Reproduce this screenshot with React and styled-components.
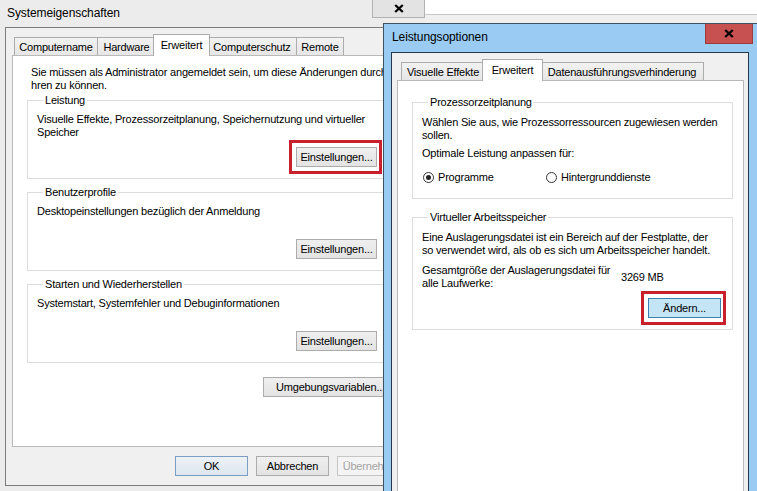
import React from "react";
import styled, { createGlobalStyle, css } from "styled-components";

const GlobalStyle = createGlobalStyle`
  html, body {
    margin: 0;
    padding: 0;
  }
  body {
    font-family: "Liberation Sans", Arial, sans-serif;
    font-size: 11px;
    letter-spacing: -0.2px;
    color: #000;
    background: #f0f0f0;
  }
`;

const Desktop = styled.div`
  position: relative;
  width: 757px;
  height: 491px;
  overflow: hidden;
  background: #f0f0f0;
`;

const BackWindow = styled.div`
  position: absolute;
  left: 424px;
  top: 0;
  right: 0;
  height: 14px;
  background: #fff;
  border-bottom: 1px solid #c9c9c9;
`;

/* ---------- generic window parts ---------- */

const CloseButton = styled.div`
  box-sizing: border-box;
  width: ${(p) => p.$w}px;
  height: ${(p) => p.$h}px;
  margin-right: ${(p) => p.$mr || 0}px;
  display: flex;
  align-items: center;
  justify-content: center;
  background: ${(p) => (p.$red ? "#c75050" : "#e3e3e3")};
  border: 1px solid ${(p) => (p.$red ? "#9d3c3c" : "#b1b1b1")};
  border-top: none;
  flex: none;
`;

const CloseIcon = () => (
  <svg width="10" height="9" viewBox="0 0 10 9">
    <path d="M1.2 1 L8.8 8 M8.8 1 L1.2 8" stroke="#000" strokeWidth="2.3" fill="none" />
  </svg>
);

const TabStrip = styled.div`
  display: flex;
  align-items: flex-end;
  height: 21px;
  padding-left: ${(p) => p.$inset}px;
  position: relative;
  z-index: 1;
  flex: none;
`;

const Tab = styled.div`
  box-sizing: border-box;
  width: ${(p) => p.$w}px;
  height: 18px;
  margin-right: -1px;
  border: 1px solid #acacac;
  border-bottom: none;
  background: linear-gradient(#f2f2f2, #e6e6e6);
  display: flex;
  align-items: center;
  justify-content: center;
  white-space: nowrap;
  ${(p) =>
    p.$active &&
    css`
      width: ${p.$w + 4}px;
      height: 22px;
      margin: 0 -3px -1px -2px;
      padding-bottom: 1px;
      background: #fff;
      position: relative;
      z-index: 1;
    `}
`;

const TabPanel = styled.div`
  box-sizing: border-box;
  background: #fff;
  border: 1px solid #b9b9b9;
  padding: ${(p) => p.$pad};
  display: flex;
  flex-direction: column;
  ${(p) => (p.$h ? `height: ${p.$h}px; flex: none;` : "flex: 1;")}
`;

const Group = styled.fieldset`
  margin: ${(p) => p.$mt || 0}px 0 0 0;
  min-width: 0;
  border: 1px solid #dcdcdc;
  padding: 0 ${(p) => p.$pr}px ${(p) => p.$pb}px 9px;
`;

const GroupLabel = styled.legend`
  margin-left: 6px;
  padding: 0 2px;
  line-height: 13px;
`;

const GroupBody = styled.div`
  display: flex;
  flex-direction: column;
  padding-top: ${(p) => p.$pt}px;
  ${(p) => p.$h && `height: ${p.$h}px; box-sizing: border-box;`}
`;

const Text = styled.div`
  line-height: 13px;
  white-space: nowrap;
  margin-top: ${(p) => p.$mt || 0}px;
  margin-left: ${(p) => p.$ml || 0}px;
`;

const ButtonRow = styled.div`
  display: flex;
  justify-content: flex-end;
  margin-top: ${(p) => (p.$mt === undefined ? "auto" : `${p.$mt}px`)};
  gap: ${(p) => p.$gap || 0}px;
  padding-right: ${(p) => p.$pr || 0}px;
`;

const Button = styled.button`
  box-sizing: border-box;
  width: ${(p) => p.$w}px;
  height: 20px;
  padding: 0;
  border-radius: 0;
  font: inherit;
  letter-spacing: inherit;
  color: ${(p) => (p.disabled ? "#a3a3a3" : "#000")};
  background: ${(p) =>
    p.$focus
      ? "#c4e5f6"
      : p.$default
      ? "linear-gradient(#ecf2f7, #dde6ee)"
      : p.disabled
      ? "#f4f4f4"
      : "linear-gradient(#efefef, #e3e3e3)"};
  border: 1px solid
    ${(p) =>
      p.$focus
        ? "#3c7fb1"
        : p.$default
        ? "#7a9fc2"
        : p.disabled
        ? "#c6c6c6"
        : "#acacac"};
`;

const Highlight = styled.span`
  display: inline-flex;
  padding: 4px 2px 4px 4px;
  margin: -7px -5px -7px -7px;
  border: 3px solid #c8202c;
`;

/* ---------- Systemeigenschaften ---------- */

const SysWindow = styled.div`
  position: absolute;
  left: 0;
  top: 0;
  width: 425px;
  height: 491px;
  background: #ececec;
  display: flex;
  flex-direction: column;
`;

const SysTitleBar = styled.div`
  height: 27px;
  display: flex;
  align-items: flex-start;
  justify-content: space-between;
  flex: none;
`;

const WindowTitle = styled.div`
  padding: ${(p) => p.$pt}px 0 0 ${(p) => p.$pl}px;
  font-size: 12px;
  letter-spacing: -0.1px;
  line-height: 14px;
  white-space: nowrap;
`;

const SysClient = styled.div`
  box-sizing: border-box;
  height: 459px;
  margin: 0 6px 0 5px;
  border: 1px solid #7c7c7c;
  background: #f0f0f0;
  padding: 6px 5px 0 6px;
  display: flex;
  flex-direction: column;
`;

/* ---------- Leistungsoptionen ---------- */

const PerfWindow = styled.div`
  position: absolute;
  left: 383px;
  top: 23px;
  width: 375px;
  height: 480px;
  box-sizing: border-box;
  border: 1px solid #3f5264;
  background: #99cbf3;
  display: flex;
  flex-direction: column;
`;

const PerfTitleBar = styled.div`
  height: 28px;
  display: flex;
  align-items: flex-start;
  justify-content: space-between;
  flex: none;
`;

const PerfClient = styled.div`
  flex: 1;
  margin: 0 8px 0 7px;
  border: 1px solid #24384c;
  border-bottom: none;
  background: #f0f0f0;
  padding: 6px 4px 0 5px;
  display: flex;
  flex-direction: column;
`;

const RadioRow = styled.div`
  display: grid;
  grid-template-columns: 123px auto;
  margin: 11px 0 0 1px;
`;

const Radio = styled.label`
  display: flex;
  align-items: center;
  gap: 4px;
  line-height: 13px;
  white-space: nowrap;
`;

const RadioDot = styled.span`
  box-sizing: border-box;
  width: 11px;
  height: 11px;
  border-radius: 50%;
  border: 1px solid #333;
  background: #fff;
  display: inline-flex;
  align-items: center;
  justify-content: center;
  &::after {
    content: "";
    width: 5px;
    height: 5px;
    border-radius: 50%;
    background: #222;
    display: ${(p) => (p.$checked ? "block" : "none")};
  }
`;

const SizeRow = styled.div`
  display: flex;
  align-items: center;
  margin-top: 7px;
`;

const SizeLabel = styled.div`
  width: 199px;
  line-height: 13px;
  white-space: nowrap;
  flex: none;
`;

const sysTabs = [
  { label: "Computername", w: 84 },
  { label: "Hardware", w: 59 },
  { label: "Erweitert", w: 53, active: true },
  { label: "Computerschutz", w: 90 },
  { label: "Remote", w: 48 },
];

const perfTabs = [
  { label: "Visuelle Effekte", w: 84 },
  { label: "Erweitert", w: 57, active: true },
  { label: "Datenausführungsverhinderung", w: 164 },
];

const sysGroups = [
  {
    title: "Leistung",
    lines: ["Visuelle Effekte, Prozessorzeitplanung, Speichernutzung und virtueller", "Speicher"],
    marked: true,
    mt: 2,
  },
  {
    title: "Benutzerprofile",
    lines: ["Desktopeinstellungen bezüglich der Anmeldung"],
    mt: 7,
  },
  {
    title: "Starten und Wiederherstellen",
    lines: ["Systemstart, Systemfehler und Debuginformationen"],
    mt: 7,
  },
];

function SystemProperties() {
  return (
    <SysWindow>
      <SysTitleBar>
        <WindowTitle $pt={6} $pl={7}>Systemeigenschaften</WindowTitle>
        <CloseButton $w={53} $h={18}>
          <CloseIcon />
        </CloseButton>
      </SysTitleBar>
      <SysClient>
        <TabStrip $inset={2}>
          {sysTabs.map((t) => (
            <Tab key={t.label} $w={t.w} $active={t.active}>
              {t.label}
            </Tab>
          ))}
        </TabStrip>
        <TabPanel $h={392} $pad="10px 14px 0 14px">
          <Text $ml={4}>
            Sie müssen als Administrator angemeldet sein, um diese Änderungen durchfü
          </Text>
          <Text $ml={4}>hren zu können.</Text>
          {sysGroups.map((g) => {
            const button = <Button $w={81}>Einstellungen...</Button>;
            return (
              <Group key={g.title} $mt={g.mt} $pr={20} $pb={11}>
                <GroupLabel>{g.title}</GroupLabel>
                <GroupBody $pt={6} $h={60}>
                  {g.lines.map((l) => (
                    <Text key={l}>{l}</Text>
                  ))}
                  <ButtonRow>{g.marked ? <Highlight>{button}</Highlight> : button}</ButtonRow>
                </GroupBody>
              </Group>
            );
          })}
          <ButtonRow $mt={14}>
            <Button $w={135}>Umgebungsvariablen...</Button>
          </ButtonRow>
        </TabPanel>
        <ButtonRow $mt={9} $gap={8} $pr={3}>
          <Button $w={73} $default>
            OK
          </Button>
          <Button $w={73}>Abbrechen</Button>
          <Button $w={73} disabled>
            Übernehmen
          </Button>
        </ButtonRow>
      </SysClient>
    </SysWindow>
  );
}

function PerformanceOptions() {
  return (
    <PerfWindow>
      <PerfTitleBar>
        <WindowTitle $pt={6} $pl={8}>Leistungsoptionen</WindowTitle>
        <CloseButton $w={48} $h={20} $mr={4} $red>
          <CloseIcon />
        </CloseButton>
      </PerfTitleBar>
      <PerfClient>
        <TabStrip $inset={4}>
          {perfTabs.map((t) => (
            <Tab key={t.label} $w={t.w} $active={t.active}>
              {t.label}
            </Tab>
          ))}
        </TabStrip>
        <TabPanel $pad="15px 10px 0 14px">
          <Group $pr={11} $pb={14}>
            <GroupLabel>Prozessorzeitplanung</GroupLabel>
            <GroupBody $pt={7}>
              <Text>Wählen Sie aus, wie Prozessorressourcen zugewiesen werden</Text>
              <Text>sollen.</Text>
              <Text $mt={5}>Optimale Leistung anpassen für:</Text>
              <RadioRow>
                <Radio>
                  <RadioDot $checked />
                  Programme
                </Radio>
                <Radio>
                  <RadioDot />
                  Hintergrunddienste
                </Radio>
              </RadioRow>
            </GroupBody>
          </Group>
          <Group $mt={12} $pr={11} $pb={11}>
            <GroupLabel>Virtueller Arbeitsspeicher</GroupLabel>
            <GroupBody $pt={7}>
              <Text>Eine Auslagerungsdatei ist ein Bereich auf der Festplatte, der</Text>
              <Text>so verwendet wird, als ob es sich um Arbeitsspeicher handelt.</Text>
              <SizeRow>
                <SizeLabel>
                  Gesamtgröße der Auslagerungsdatei für
                  <br />
                  alle Laufwerke:
                </SizeLabel>
                <span>3269 MB</span>
              </SizeRow>
              <ButtonRow $mt={8}>
                <Highlight>
                  <Button $w={73} $focus>
                    Ändern...
                  </Button>
                </Highlight>
              </ButtonRow>
            </GroupBody>
          </Group>
        </TabPanel>
      </PerfClient>
    </PerfWindow>
  );
}

export default function App() {
  return (
    <>
      <GlobalStyle />
      <Desktop>
        <BackWindow />
        <SystemProperties />
        <PerformanceOptions />
      </Desktop>
    </>
  );
}
